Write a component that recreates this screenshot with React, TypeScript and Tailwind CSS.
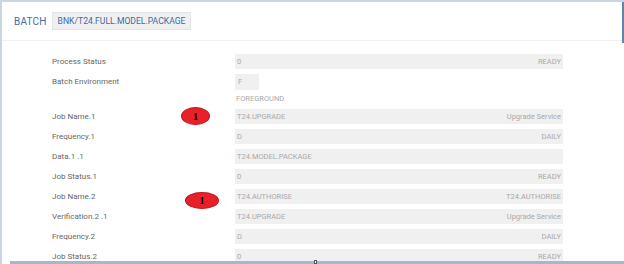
import React from 'react';

type Row = { label: string; value: string; right?: string; short?: boolean; note?: string };

const rows: Row[] = [
  { label: 'Process Status', value: '0', right: 'READY' },
  { label: 'Batch Environment', value: 'F', short: true, note: 'FOREGROUND' },
  { label: 'Job Name.1', value: 'T24.UPGRADE', right: 'Upgrade Service' },
  { label: 'Frequency.1', value: 'D', right: 'DAILY' },
  { label: 'Data.1 .1', value: 'T24.MODEL.PACKAGE' },
  { label: 'Job Status.1', value: '0', right: 'READY' },
  { label: 'Job Name.2', value: 'T24.AUTHORISE', right: 'T24.AUTHORISE' },
  { label: 'Verification.2 .1', value: 'T24.UPGRADE', right: 'Upgrade Service' },
  { label: 'Frequency.2', value: 'D', right: 'DAILY' },
  { label: 'Job Status.2', value: '0', right: 'READY' },
];

function Marker({ className }: { className: string }) {
  return (
    <div
      className={`absolute flex items-center justify-center rounded-[50%] bg-[#e8202a] border border-[#c0161d] text-[10px] font-bold text-black font-['Liberation_Serif',serif] ${className}`}
    >
      1
    </div>
  );
}

export default function App() {
  return (
    <div className="relative w-[624px] h-[264px] overflow-hidden bg-white border-t-2 border-l-2 border-[#cbd4e3] font-['Roboto',sans-serif]">
      {/* header */}
      <div className="flex items-center h-[39px] pl-[12px] gap-[5px] border-b border-[#f1f1f1]">
        <span className="text-[10px] text-[#3f6ca6] tracking-[0.2px]">BATCH</span>
        <div className="flex items-center h-[18px] px-[5px] bg-[#f0f0f0] border border-[#e4e4e4] text-[8.6px] text-[#3d6aa2]">
          BNK/T24.FULL.MODEL.PACKAGE
        </div>
      </div>
      <div className="absolute right-0 top-0 w-[2px] h-[41px] bg-[#5f83ab]" />

      {/* body */}
      <div className="flex flex-col pt-[13px] pl-[50px]">
        {rows.map((r) => (
          <React.Fragment key={r.label}>
            <div className="grid grid-cols-[183px_328px] items-center h-[15px] mb-[5px]">
              <span className="text-[8px] text-[#666]">{r.label}</span>
              {r.short ? (
                <div className="flex items-center w-[24px] h-[16px] px-[3px] bg-[#f0f0f0] text-[7.5px] text-[#a9a9a9]">
                  {r.value}
                </div>
              ) : (
                <div className="flex items-center justify-between h-[15px] pl-[2px] pr-[2px] bg-[#f0f0f0] text-[7.5px] text-[#a9a9a9]">
                  <span>{r.value}</span>
                  {r.right && <span>{r.right}</span>}
                </div>
              )}
            </div>
            {r.note && (
              <div className="grid grid-cols-[183px_328px] h-[10px] mb-[5px]">
                <span />
                <span className="pl-[1px] leading-[10px] text-[7.5px] text-[#a9a9a9]">{r.note}</span>
              </div>
            )}
          </React.Fragment>
        ))}
      </div>

      <Marker className="left-[179px] top-[105px] w-[29px] h-[18px]" />
      <Marker className="left-[183px] top-[190px] w-[34px] h-[17px]" />

      {/* bottom bar */}
      <div className="absolute left-[8px] right-0 bottom-0 h-[3px] bg-[#a9b5c8]" />
      <div className="absolute left-[312px] bottom-0 w-[3px] h-[4px] bg-white border border-[#555]" />
    </div>
  );
}
